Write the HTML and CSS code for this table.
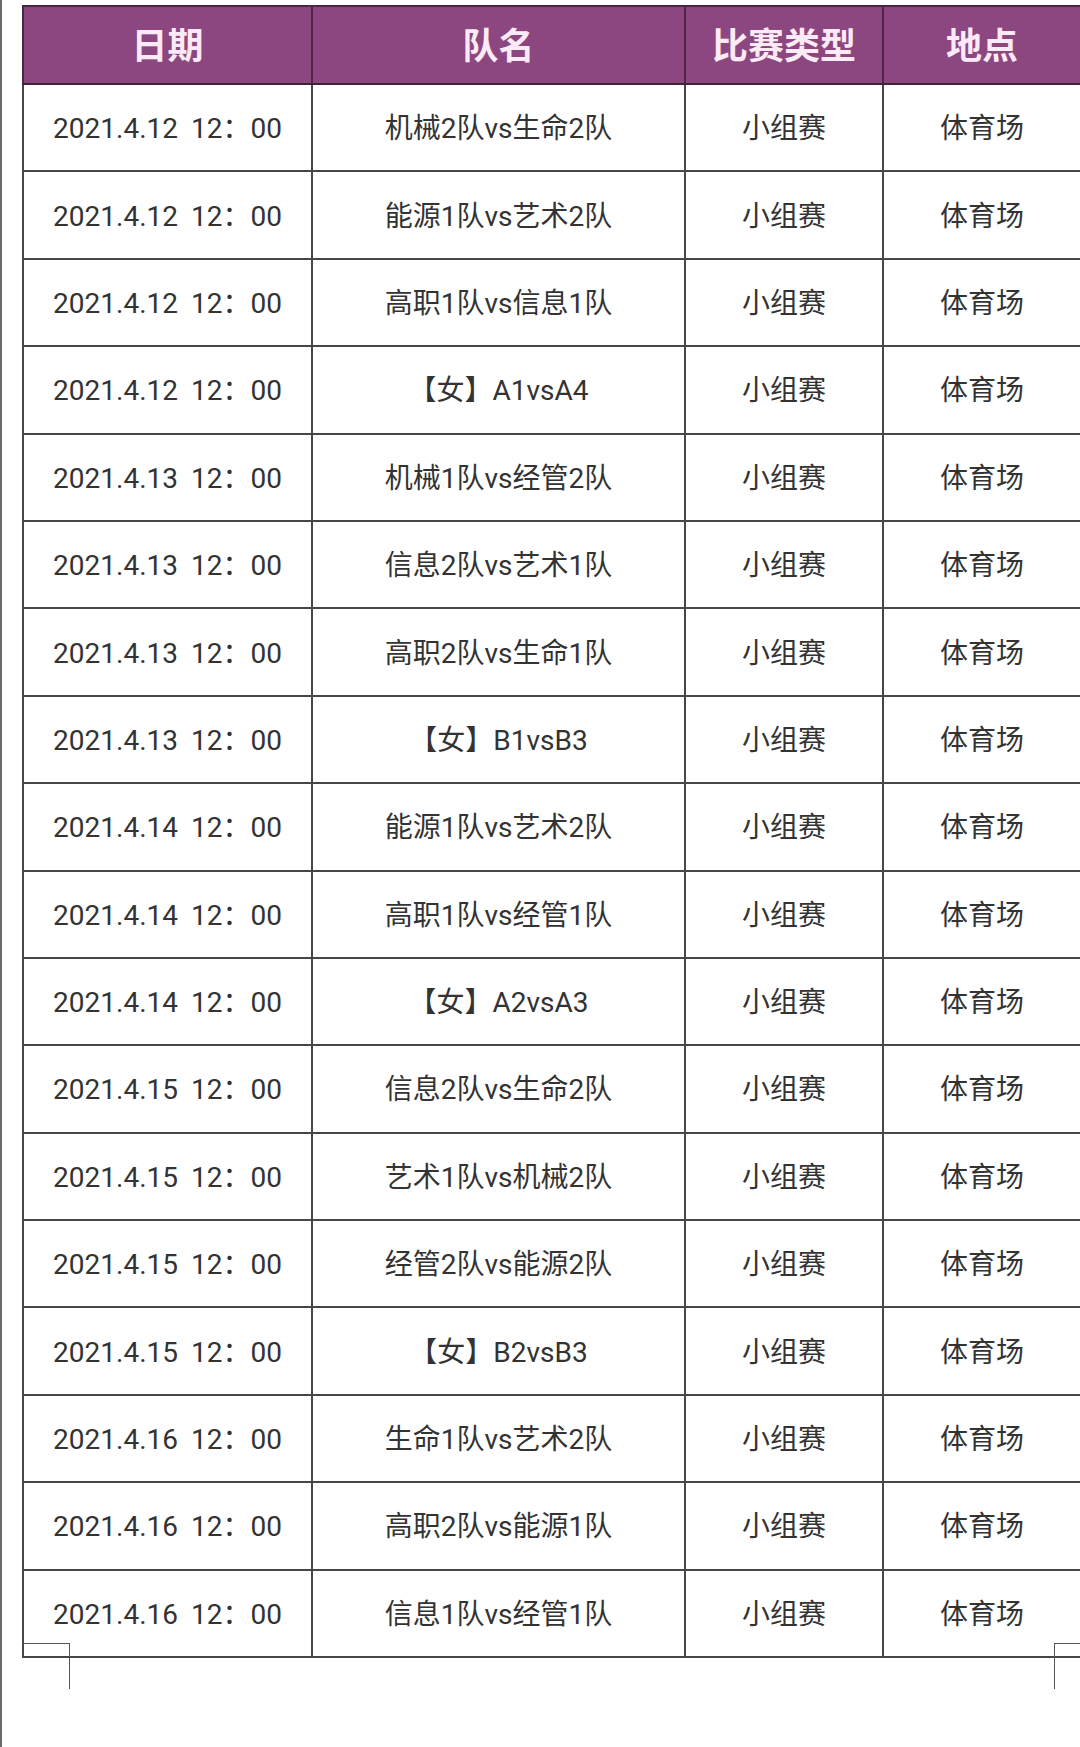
FILE: index.html
```html
<!DOCTYPE html>
<html lang="zh">
<head>
<meta charset="utf-8">
<title>赛程表</title>
<link rel="stylesheet" href="styles.css">
</head>
<body>
<div class="page">
  <table class="schedule">
    <colgroup>
      <col class="c-date"><col class="c-team"><col class="c-type"><col class="c-place">
    </colgroup>
    <thead>
      <tr><th>日期</th><th>队名</th><th>比赛类型</th><th>地点</th></tr>
    </thead>
    <tbody>
      <tr><td class="date">2021.4.12<span class="time">12：00</span></td><td>机械2队vs生命2队</td><td>小组赛</td><td>体育场</td></tr>
      <tr><td class="date">2021.4.12<span class="time">12：00</span></td><td>能源1队vs艺术2队</td><td>小组赛</td><td>体育场</td></tr>
      <tr><td class="date">2021.4.12<span class="time">12：00</span></td><td>高职1队vs信息1队</td><td>小组赛</td><td>体育场</td></tr>
      <tr><td class="date">2021.4.12<span class="time">12：00</span></td><td>【女】A1vsA4</td><td>小组赛</td><td>体育场</td></tr>
      <tr><td class="date">2021.4.13<span class="time">12：00</span></td><td>机械1队vs经管2队</td><td>小组赛</td><td>体育场</td></tr>
      <tr><td class="date">2021.4.13<span class="time">12：00</span></td><td>信息2队vs艺术1队</td><td>小组赛</td><td>体育场</td></tr>
      <tr><td class="date">2021.4.13<span class="time">12：00</span></td><td>高职2队vs生命1队</td><td>小组赛</td><td>体育场</td></tr>
      <tr><td class="date">2021.4.13<span class="time">12：00</span></td><td>【女】B1vsB3</td><td>小组赛</td><td>体育场</td></tr>
      <tr><td class="date">2021.4.14<span class="time">12：00</span></td><td>能源1队vs艺术2队</td><td>小组赛</td><td>体育场</td></tr>
      <tr><td class="date">2021.4.14<span class="time">12：00</span></td><td>高职1队vs经管1队</td><td>小组赛</td><td>体育场</td></tr>
      <tr><td class="date">2021.4.14<span class="time">12：00</span></td><td>【女】A2vsA3</td><td>小组赛</td><td>体育场</td></tr>
      <tr><td class="date">2021.4.15<span class="time">12：00</span></td><td>信息2队vs生命2队</td><td>小组赛</td><td>体育场</td></tr>
      <tr><td class="date">2021.4.15<span class="time">12：00</span></td><td>艺术1队vs机械2队</td><td>小组赛</td><td>体育场</td></tr>
      <tr><td class="date">2021.4.15<span class="time">12：00</span></td><td>经管2队vs能源2队</td><td>小组赛</td><td>体育场</td></tr>
      <tr><td class="date">2021.4.15<span class="time">12：00</span></td><td>【女】B2vsB3</td><td>小组赛</td><td>体育场</td></tr>
      <tr><td class="date">2021.4.16<span class="time">12：00</span></td><td>生命1队vs艺术2队</td><td>小组赛</td><td>体育场</td></tr>
      <tr><td class="date">2021.4.16<span class="time">12：00</span></td><td>高职2队vs能源1队</td><td>小组赛</td><td>体育场</td></tr>
      <tr><td class="date">2021.4.16<span class="time">12：00</span></td><td>信息1队vs经管1队</td><td>小组赛</td><td>体育场</td></tr>
    </tbody>
  </table>
  <span class="crop crop-left"></span>
  <span class="crop crop-right"></span>
</div>
</body>
</html>
```
FILE: styles.css
```css
html, body {
  margin: 0;
  padding: 0;
  background: #ffffff;
}
body {
  width: 1080px;
  height: 1747px;
  overflow: hidden;
  font-family: "Roboto", "Noto Sans CJK SC", sans-serif;
}
.page {
  position: relative;
  box-sizing: border-box;
  height: 1747px;
  border-left: 2px solid #6a6a6a;
  padding: 5px 0 0 20px;
}
.schedule {
  width: 1058px;
  table-layout: fixed;
  border-collapse: collapse;
}
.c-date { width: 289px; }
.c-team { width: 373px; }
.c-type { width: 198px; }
.c-place { width: 198px; }

.schedule th {
  height: 72px;
  padding: 0 0 4px;
  background: #8c4780;
  color: #fceaf6;
  font-family: "Noto Sans CJK SC", sans-serif;
  font-weight: 700;
  font-size: 36px;
  text-align: center;
  border: 2px solid #4a2844;
  border-bottom-color: #3e2238;
}
.schedule td {
  height: 82.4px;
  padding: 0 0 3px;
  text-align: center;
  color: #333333;
  font-size: 28px;
  border: 2px solid #474747;
  white-space: nowrap;
}
.time { margin-left: 13px; }

.crop {
  position: absolute;
  top: 1643px;
  height: 45px;
  border-top: 1.5px solid #555;
}
.crop-left {
  left: 20px;
  width: 47px;
  border-right: 1.5px solid #555;
}
.crop-right {
  left: 1052px;
  width: 30px;
  border-left: 1.5px solid #555;
}
```
